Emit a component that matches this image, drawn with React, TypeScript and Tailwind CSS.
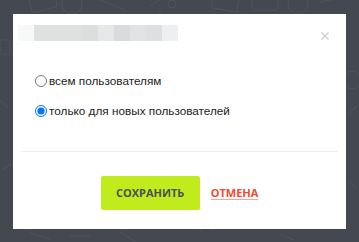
import { useState } from "react";

const blur = [
  "w-[16px] bg-[#f7f8f8]",
  "w-[48px] bg-[#dfe0e0]",
  "w-[16px] bg-[#dcdddd]",
  "w-[16px] bg-[#e6e7e8]",
  "w-[16px] bg-[#dadbdc]",
  "w-[16px] bg-[#e2e3e4]",
  "w-[16px] bg-[#dedfe0]",
  "w-[16px] bg-[#eeeff0]",
];

export default function App() {
  const [choice, setChoice] = useState("new");

  return (
    <div className="relative w-[359px] h-[242px] bg-[#444951] pt-[14px] pl-[13px] overflow-hidden font-['Liberation_Sans',Arial,sans-serif]">
      {/* faint doodles in the backdrop */}
      <svg className="absolute inset-0" width="359" height="242" fill="none" stroke="#4f545c" strokeWidth="1">
        <rect x="30" y="-6" width="26" height="16" rx="3" transform="rotate(-15 43 2)" />
        <circle cx="72" cy="4" r="10" />
        <path d="M95 -2 L125 10" />
        <circle cx="172" cy="4" r="4" />
        <path d="M150 6 L162 -2 M160 10 v4" />
        <rect x="212" y="-4" width="26" height="14" rx="2" transform="rotate(10 225 3)" />
        <rect x="252" y="-6" width="26" height="16" rx="3" />
        <circle cx="298" cy="4" r="10" />
        <path d="M320 2 L350 -4" />
        <circle cx="352" cy="80" r="9" />
        <path d="M348 115 l10 -10 M348 180 l8 8" />
        <rect x="0" y="40" width="10" height="14" rx="2" />
        <path d="M0 100 l8 8 M2 170 l9 -6" />
        <path d="M30 232 l20 8 M70 236 h20 M120 232 l16 10 M200 232 a6 6 0 0 1 12 0 M280 234 l14 6" />
      </svg>

      <div className="relative w-[333px] h-[215px] bg-white flex flex-col">
        {/* header, title is blurred out */}
        <div className="flex items-start justify-between mt-[11px] pl-[5px] pr-[17px] h-[16px]">
          <div className="flex h-[16px]">
            {blur.map((c, i) => (
              <div key={i} className={c} />
            ))}
          </div>
          <svg width="8" height="8" viewBox="0 0 8 8" className="mt-[7px]" stroke="#d2d2d2" strokeWidth="1.5">
            <path d="M0.5 0.5 L7.5 7.5 M7.5 0.5 L0.5 7.5" />
          </svg>
        </div>

        <div className="flex flex-col gap-[14px] mt-[32px] pl-[22px] text-[11.75px] text-[#222] leading-[16px]">
          <label className="flex items-center gap-[2px]">
            <input
              type="radio"
              name="who"
              className="w-[12px] h-[12px] m-0"
              checked={choice === "all"}
              onChange={() => setChoice("all")}
            />
            всем пользователям
          </label>
          <label className="flex items-center gap-[2px]">
            <input
              type="radio"
              name="who"
              className="w-[12px] h-[12px] m-0"
              checked={choice === "new"}
              onChange={() => setChoice("new")}
            />
            только для новых пользователей
          </label>
        </div>

        <div className="mx-[9px] mt-[32px] h-px bg-[#ebebeb]" />

        <div className="flex justify-center items-center gap-[11px] mt-[24px]">
          <button className="w-[99px] h-[34px] rounded-[2px] bg-[#c0ec1e] text-[#4a4f57] text-[11px] font-bold font-['Open_Sans',sans-serif]">
            СОХРАНИТЬ
          </button>
          <a className="text-[#f04a2f] text-[11px] font-bold font-['Open_Sans',sans-serif] border-b border-[#f8a596] leading-[13px]">
            ОТМЕНА
          </a>
        </div>
      </div>
    </div>
  );
}
